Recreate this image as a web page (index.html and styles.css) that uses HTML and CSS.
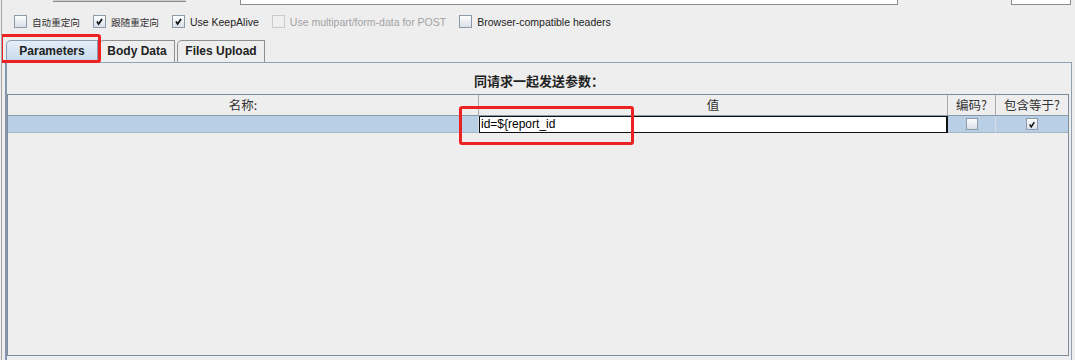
FILE: index.html
```html
<!DOCTYPE html>
<!-- Панель параметров HTTP-запроса -->
<html lang="zh-CN">
<head>
  <meta charset="UTF-8">
  <meta name="viewport" content="width=device-width, initial-scale=1.0">
  <title>HTTP请求 - 参数</title>
  <link rel="stylesheet" href="styles.css">
</head>
<body>
  <div class="frame">
    <!-- Обрезанные сверху поля предыдущей строки -->
    <div class="top-edges">
      <div class="edge-btn"></div>
      <div class="edge-field edge-path"></div>
      <div class="edge-field edge-enc"></div>
    </div>

    <!-- Строка флажков -->
    <div class="options">
      <label class="opt"><span class="cb"></span><span class="zh-small">自动重定向</span></label>
      <label class="opt"><span class="cb checked"><svg viewBox="0 0 13 13"><path d="M3.5 6.5 L5.5 9.5 L9.5 3.5"/></svg></span><span class="zh-small">跟随重定向</span></label>
      <label class="opt"><span class="cb checked"><svg viewBox="0 0 13 13"><path d="M3.5 6.5 L5.5 9.5 L9.5 3.5"/></svg></span>Use KeepAlive</label>
      <label class="opt disabled"><span class="cb"></span>Use multipart/form-data for POST</label>
      <label class="opt"><span class="cb"></span>Browser-compatible headers</label>
    </div>

    <!-- Вкладки -->
    <div class="tabs">
      <div class="tab active tab-params">Parameters</div>
      <div class="tab tab-body">Body Data</div>
      <div class="tab tab-files">Files Upload</div>
    </div>

    <!-- Содержимое вкладки -->
    <div class="pane">
      <div class="pane-title">同请求一起发送参数：</div>
      <div class="table">
        <div class="thead">
          <div class="th">名称:</div>
          <div class="th">值</div>
          <div class="th">编码?</div>
          <div class="th">包含等于?</div>
        </div>
        <div class="tr selected">
          <div class="td"></div>
          <div class="td editing">id=${report_id</div>
          <div class="td center"><span class="cb small"></span></div>
          <div class="td center"><span class="cb small checked"><svg viewBox="0 0 13 13"><path d="M3.5 6.5 L5.5 9.5 L9.5 3.5"/></svg></span></div>
        </div>
      </div>
    </div>

    <!-- Красные рамки-пометки поверх интерфейса -->
    <div class="mark mark-tab"></div>
    <div class="mark mark-value"></div>
  </div>
</body>
</html>
```

FILE: styles.css
```css
/* Общие стили страницы */
body {
  margin: 0;
  background: #eeeeee; /* Серый фон Swing */
  font-family: "Liberation Sans", "Noto Sans CJK SC", sans-serif;
  font-size: 11px;
  color: #222;
}

* {
  box-sizing: border-box;
}

/* Внешняя рамка окна */
.frame {
  position: relative;
  margin-left: 1px;
  height: 360px;
  border-left: 1px solid #a4a4a4;
  overflow: hidden;
}

/* Края полей сверху */
.top-edges {
  display: flex;
  height: 5px;
}

.edge-btn {
  margin-left: 51px;
  width: 133px;
  height: 2px;
  background: #cfcfcf;
  border-bottom: 1px solid #8a8a8a;
}

.edge-field {
  height: 5px;
  background: #fff;
  border: 1px solid #8c8c8c;
  border-top: none;
}

.edge-path {
  margin-left: 54px;
  width: 658px;
}

.edge-enc {
  margin-left: 113px;
  width: 60px;
}

/* Флажки */
.options {
  display: flex;
  align-items: center;
  gap: 13px;
  margin-top: 9px;
  padding-left: 12px;
  height: 15px;
  font-size: 10.5px;
}

.opt {
  display: flex;
  align-items: center;
  gap: 5px;
  white-space: nowrap;
}

.opt.disabled {
  color: #a3a3a3;
}

.zh-small {
  font-family: "Noto Sans CJK SC", sans-serif;
  font-size: 9.6px;
  color: #333;
}

/* Квадрат флажка */
.cb {
  display: inline-flex;
  align-items: center;
  justify-content: center;
  width: 13px;
  height: 13px;
  border: 1px solid #8e9aa8;
  background: linear-gradient(#fdfdfd, #d9e0e8);
}

.opt.disabled .cb {
  border-color: #c8ccd0;
  background: #efefef;
}

.cb svg {
  width: 11px;
  height: 11px;
}

.cb path {
  fill: none;
  stroke: #111;
  stroke-width: 2;
}

.cb.small {
  width: 12px;
  height: 12px;
}

/* Вкладки */
.tabs {
  display: flex;
  gap: 1px;
  margin-top: 11px;
  padding-left: 4px;
  height: 22px;
  align-items: flex-end;
}

.tab {
  height: 22px;
  line-height: 20px;
  text-align: center;
  font-size: 12px;
  font-weight: bold;
  color: #222;
  border: 1px solid #8e8f8f;
  border-bottom: none;
  border-top-left-radius: 5px;
  background: #eeeeee;
}

.tab.active {
  background: linear-gradient(#e4eef8, #c5d8eb);
  border-color: #8a9db0;
}

.tab-params {
  width: 92px;
}

.tab-body {
  width: 76px;
}

.tab-files {
  width: 88px;
  margin-left: 1px;
}

/* Панель содержимого вкладки */
.pane {
  margin-left: 3px;
  width: 1067px;
  height: 298px;
  border-top: 1px solid #8ea4ba;
  border-left: 2px solid #8398ae;
  border-right: 1px solid #8ea0b2;
  background: #eeeeee;
}

.pane-title {
  height: 31px;
  padding-top: 8px;
  text-align: center;
  font-family: "Noto Sans CJK SC", sans-serif;
  font-size: 13px;
  font-weight: bold;
  color: #222;
}

/* Таблица параметров */
.table {
  width: 1062px;
  height: 262px;
  border: 1px solid #7f8c99;
  background: #eeeeee;
}

.thead,
.tr {
  display: grid;
  grid-template-columns: 471px 469px 48px 72px;
}

.th {
  height: 21px;
  line-height: 20px;
  text-align: center;
  font-family: "Noto Sans CJK SC", sans-serif;
  font-size: 12.5px;
  color: #333;
  border-right: 1px solid #a9a9a9;
  border-bottom: 1px solid #8c99a6;
}

.th:last-child {
  border-right: none;
}

.tr {
  height: 17px;
}

.tr.selected {
  background: #b8cfe5;
}

.td {
  height: 17px;
  border-right: 1px solid #d2dde8;
  border-bottom: 1px solid #a5b6c7;
}

.td:last-child {
  border-right: none;
}

.td.center {
  display: flex;
  align-items: center;
  justify-content: center;
}

/* Ячейка в режиме редактирования */
.td.editing {
  background: #fff;
  border: 1px solid #111;
  border-right-width: 2px;
  padding-left: 1px;
  font-size: 12px;
  line-height: 14px;
  color: #000;
}

/* Красные пометки */
.mark {
  position: absolute;
  border: 3px solid #ec2222;
  border-radius: 3px;
}

.mark-tab {
  left: -2px;
  top: 34px;
  width: 101px;
  height: 29px;
}

.mark-value {
  left: 457px;
  top: 106px;
  width: 175px;
  height: 39px;
}
```
